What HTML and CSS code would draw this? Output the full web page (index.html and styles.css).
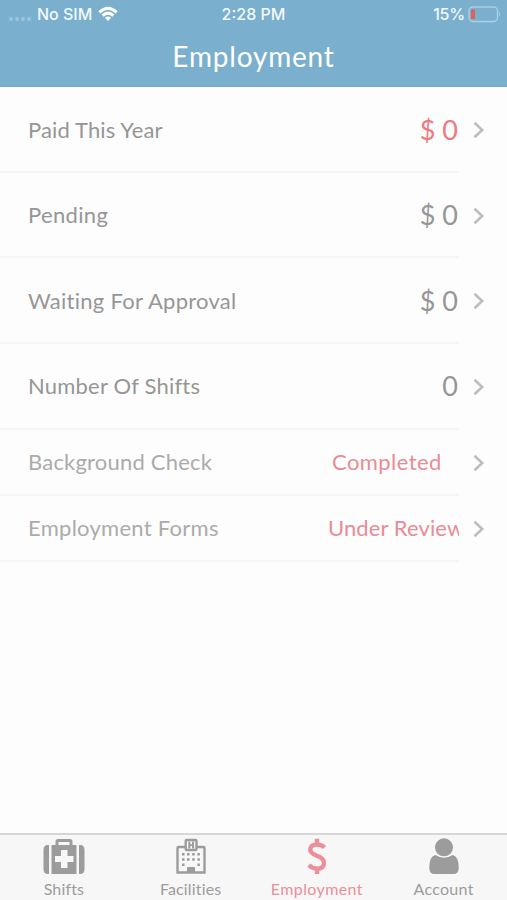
FILE: index.html
```
<!DOCTYPE html>
<html lang="en">
<head>
    <meta charset="UTF-8">
    <meta name="viewport" content="width=device-width, initial-scale=1.0">
    <title>Employment</title>
    <link rel="stylesheet" href="styles.css">
</head>
<body>
    <header class="header">
        <div class="status">
            <div class="carrier">
                <span class="dots"><i></i><i></i><i></i><i></i></span>
                <span class="sim">No SIM</span>
                <svg class="wifi" width="20" height="16" viewBox="0 0 20 16">
                    <path d="M0.3 5.3 Q10 -3.9 19.7 5.3 L17.6 7.4 Q10 .3 2.4 7.4Z"/>
                    <path d="M3.6 8.6 Q10 2.6 16.4 8.6 L14.3 10.7 Q10 6.9 5.7 10.7Z"/>
                    <path d="M6.8 11.8 Q10 9.1 13.2 11.8 L10 15Z"/>
                </svg>
            </div>
            <span class="time">2:28 PM</span>
            <div class="power">
                <span class="percent">15%</span>
                <svg width="33" height="17" viewBox="0 0 33 17">
                    <rect x="1" y="1" width="28.5" height="14.5" rx="4" fill="none" stroke="#abd0e4" stroke-width="1.4"/>
                    <path d="M31 5.8 Q33 8.2 31 10.8Z" fill="#abd0e4"/>
                    <rect x="3" y="3.5" width="4" height="9.5" rx="1" fill="#e45f57"/>
                </svg>
            </div>
        </div>
        <h1>Employment</h1>
    </header>

    <main class="list">
        <div class="row">
            <div class="cell"><span class="label paid">Paid This Year</span><span class="amount red">$ 0</span></div>
            <svg class="chevron" width="12" height="18" viewBox="0 0 12 18"><path d="M1.5 1.8 L9.2 9 L1.5 16.2"/></svg>
        </div>
        <div class="row">
            <div class="cell"><span class="label pending">Pending</span><span class="amount">$ 0</span></div>
            <svg class="chevron" width="12" height="18" viewBox="0 0 12 18"><path d="M1.5 1.8 L9.2 9 L1.5 16.2"/></svg>
        </div>
        <div class="row">
            <div class="cell"><span class="label waiting">Waiting For Approval</span><span class="amount">$ 0</span></div>
            <svg class="chevron" width="12" height="18" viewBox="0 0 12 18"><path d="M1.5 1.8 L9.2 9 L1.5 16.2"/></svg>
        </div>
        <div class="row">
            <div class="cell"><span class="label shifts">Number Of Shifts</span><span class="amount">0</span></div>
            <svg class="chevron" width="12" height="18" viewBox="0 0 12 18"><path d="M1.5 1.8 L9.2 9 L1.5 16.2"/></svg>
        </div>
        <div class="row small">
            <div class="cell"><span class="label">Background Check</span><span class="state completed">Completed</span></div>
            <svg class="chevron" width="12" height="18" viewBox="0 0 12 18"><path d="M1.5 1.8 L9.2 9 L1.5 16.2"/></svg>
        </div>
        <div class="row small">
            <div class="cell"><span class="label forms">Employment Forms</span><span class="state review">Under Review</span></div>
            <svg class="chevron" width="12" height="18" viewBox="0 0 12 18"><path d="M1.5 1.8 L9.2 9 L1.5 16.2"/></svg>
        </div>
    </main>

    <nav class="tabs">
        <a class="tab">
            <svg width="42" height="37" viewBox="0 0 42 37">
                <path d="M6 7 V36 H5 Q.5 36 .5 31 V12 Q.5 7 5 7Z M36 7 H37 Q41.5 7 41.5 12 V31 Q41.5 36 37 36 H36Z"/>
                <path fill-rule="evenodd" d="M8.5 7 H12.5 V3.5 Q12.5 1 15 1 H27 Q29.5 1 29.5 3.5 V7 H33.5 V36 H8.5Z M15.5 7 H26.5 V4 H15.5Z M18 12 V18 H12 V24 H18 V30 H24.5 V24 H30.5 V18 H24.5 V12Z"/>
            </svg>
            <span>Shifts</span>
        </a>
        <a class="tab">
            <svg width="30" height="37" viewBox="0 0 30 37">
                <path d="M9.5 9 H2.5 Q1.5 9 1.5 10 V34.5 H28.5 V10 Q28.5 9 27.5 9 H20.5" fill="none" stroke="currentColor" stroke-width="2.4"/>
                <rect x="9.7" y="2" width="10.8" height="10" rx="1" fill="none" stroke="currentColor" stroke-width="2.4"/>
                <path d="M12.3 3.5 H14.3 V6.2 H16 V3.5 H18 V10.5 H16 V8 H14.3 V10.5 H12.3Z"/>
                <path d="M6 15h2.5v2.5h-2.5z M11 15h2.5v2.5h-2.5z M16.2 15h2.5v2.5h-2.5z M21.4 15h2.5v2.5h-2.5z M6 20.2h2.5v2.5h-2.5z M11 20.2h2.5v2.5h-2.5z M16.2 20.2h2.5v2.5h-2.5z M21.4 20.2h2.5v2.5h-2.5z M6 25.4h2.5v2.5h-2.5z M21.4 25.4h2.5v2.5h-2.5z"/>
                <path d="M11 35 V30 Q11 29 12 29 H18 Q19 29 19 30 V35Z"/>
            </svg>
            <span>Facilities</span>
        </a>
        <a class="tab active">
            <svg width="20" height="37" viewBox="0 0 20 37">
                <path d="M17.5 9.5 Q14.5 6.5 10 6.5 Q3.3 6.5 3.3 11.5 Q3.3 15.3 9.5 17.6 Q17 20 17 25 Q17 30.7 10 30.7 Q5.5 30.7 1.8 27 M10 .7 V7 M10 30 V36" fill="none" stroke="currentColor" stroke-width="4.4"/>
            </svg>
            <span>Employment</span>
        </a>
        <a class="tab account">
            <svg width="30" height="37" viewBox="0 0 30 37">
                <circle cx="15" cy="9.3" r="9"/>
                <path d="M6.5 17 Q15 22.5 23.5 17 Q29.7 18 29.7 30 Q29.7 36 24.5 36 H5.5 Q.3 36 .3 30 Q.3 18 6.5 17Z"/>
            </svg>
            <span>Account</span>
        </a>
    </nav>
</body>
</html>
```
FILE: styles.css
```
body {
    margin: 0;
    height: 900px;
    display: flex;
    flex-direction: column;
    overflow: hidden;
    background: #fdfdfd;
    color: #969696;
    font-family: Lato, "Liberation Sans", sans-serif;
}

.header {
    box-sizing: border-box;
    height: 87px;
    background: #7bafce;
    border-bottom: 1px solid #75a7c4;
    color: #fff;
}

.status {
    height: 28px;
    display: grid;
    grid-template-columns: 1fr auto 1fr;
    align-items: center;
    font: 500 16px Inter, sans-serif;
    color: #f2f9fd;
}

.carrier {
    display: flex;
    align-items: center;
    padding-left: 9px;
}

.dots {
    display: flex;
    gap: 2px;
    width: 28px;
    padding-top: 9px;
}

.dots i {
    width: 4px;
    height: 4px;
    border-radius: 50%;
    background: #9cc6de;
}

.wifi {
    margin-left: 6px;
    fill: #fff;
}

.power {
    display: flex;
    align-items: center;
    justify-content: flex-end;
    gap: 3px;
    padding-right: 6px;
}

.percent {
    letter-spacing: -0.2px;
}

h1 {
    margin: 0;
    text-align: center;
    font-size: 28px;
    font-weight: 400;
    line-height: 57px;
    letter-spacing: 0.8px;
}

.list {
    flex: 1;
    padding-top: 0.3px;
}

.row {
    display: flex;
    align-items: center;
    height: 85.6px;
}

.row.small {
    height: 66px;
}

.cell {
    box-sizing: border-box;
    width: 459px;
    height: 100%;
    display: flex;
    align-items: center;
    padding-left: 28px;
    border-bottom: 2px solid #f5f5f5;
    overflow: hidden;
    white-space: nowrap;
}

.label {
    flex: 1;
    font-size: 22px;
    letter-spacing: 0.2px;
}

.paid {
    letter-spacing: 0.13px;
}

.pending {
    letter-spacing: 0.35px;
}

.waiting,
.forms {
    letter-spacing: 0.27px;
}

.small .label {
    color: #ababab;
}

.amount {
    margin-right: 1px;
    font-size: 27px;
}

.amount.red {
    color: #ed7a7e;
}

.state {
    flex: none;
    font-size: 22px;
    color: #ea8b95;
}

.completed {
    width: 127px;
    letter-spacing: 0.43px;
}

/* runs into the end of the cell */
.review {
    width: 131px;
    letter-spacing: 0.1px;
}

.chevron {
    margin-left: 14px;
    fill: none;
    stroke: #bdbdbd;
    stroke-width: 2.6;
}

.tabs {
    box-sizing: border-box;
    height: 67px;
    display: grid;
    grid-template-columns: repeat(4, 1fr);
    border-top: 2px solid #d6d6d6;
    background: #f7f7f7;
    color: #9c9c9c;
}

.tab {
    display: flex;
    flex-direction: column;
    align-items: center;
    padding-top: 3px;
    padding-left: 1px;
    font-size: 16px;
    line-height: 28px;
    letter-spacing: 0.15px;
}

.tab svg {
    flex: none;
    fill: currentColor;
}

.active {
    padding-left: 0;
    color: #ec8f9a;
    letter-spacing: 0.4px;
}

.account {
    padding-left: 0;
    letter-spacing: 0.3px;
}
```
